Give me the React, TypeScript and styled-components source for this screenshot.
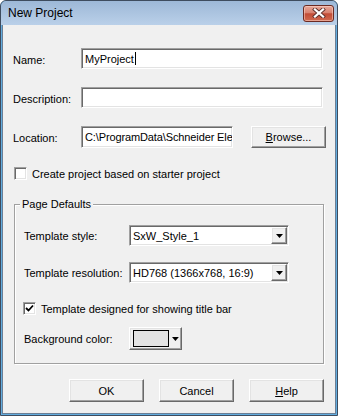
import React from "react";
import styled, { createGlobalStyle, css } from "styled-components";

const Global = createGlobalStyle`
  html, body { margin: 0; padding: 0; background: #fff; }
  body { font-family: "Liberation Sans", Arial, sans-serif; font-size: 11px; color: #000; }
  * { box-sizing: border-box; }
`;

const sunken = css`
  border: 1px solid;
  border-color: #a0a0a0 #ffffff #ffffff #a0a0a0;
  box-shadow: inset 1px 1px 0 #696969, inset -1px -1px 0 #e3e3e3;
`;

const raised = css`
  border: 1px solid;
  border-color: #ffffff #696969 #696969 #ffffff;
  box-shadow: inset -1px -1px 0 #a0a0a0, inset 1px 1px 0 #e3e3e3;
`;

const Window = styled.div`
  width: 338px;
  height: 416px;
  border: 1px solid #3e4c5e;
  border-radius: 6px 6px 0 0;
  background: #62ade0;
  display: flex;
  flex-direction: column;
  overflow: hidden;
`;

const TitleBar = styled.div`
  height: 24px;
  flex: none;
  display: flex;
  align-items: center;
  justify-content: space-between;
  padding: 0 3px 0 7px;
  background: linear-gradient(#9db8d7, #bad0e9);
  border-radius: 5px 5px 0 0;
`;

const Title = styled.span`
  font-family: "Liberation Sans", Arial, sans-serif;
  font-size: 12px;
  color: #000;
`;

const CloseButton = styled.div`
  width: 31px;
  height: 17px;
  border: 1px solid #6b2a22;
  border-radius: 3px;
  background: linear-gradient(#e8a899 0%, #d88270 45%, #c24c36 52%, #d06a50 100%);
  box-shadow: inset 0 0 0 1px rgba(255, 220, 210, 0.5);
  display: flex;
  align-items: center;
  justify-content: center;
`;

const Body = styled.div`
  flex: 1;
  margin: 0 1px 1px;
  background: #f0f0f0;
  border: 1px solid #6a7f96;
  border-top: none;
  padding: 0 10px;
  display: flex;
  flex-direction: column;
`;

const FieldRow = styled.div<{ $top: number; $labelWidth: number }>`
  display: grid;
  grid-template-columns: ${(p) => p.$labelWidth}px auto auto;
  justify-content: start;
  align-items: center;
  margin-top: ${(p) => p.$top}px;
`;

const Label = styled.label<{ $drop?: number }>`
  padding-top: ${(p) => p.$drop ?? 0}px;
  white-space: nowrap;
`;

const TextBox = styled.div<{ $width: number; $height?: number; $tight?: boolean }>`
  ${sunken};
  width: ${(p) => p.$width}px;
  height: ${(p) => p.$height ?? 21}px;
  background: #fff;
  padding: 0 ${(p) => (p.$tight ? 1 : 3)}px 0 3px;
  letter-spacing: ${(p) => (p.$tight ? "-0.12px" : "0")};
  display: flex;
  align-items: center;
  overflow: hidden;
  white-space: nowrap;
`;

const Caret = styled.span`
  display: inline-block;
  width: 1px;
  height: 13px;
  background: #000;
  margin-left: 1px;
`;

const Button = styled.div<{ $width: number; $height?: number; $gapLeft?: number }>`
  ${raised};
  width: ${(p) => p.$width}px;
  height: ${(p) => p.$height ?? 23}px;
  margin-left: ${(p) => p.$gapLeft ?? 0}px;
  background: #f0f0f0;
  display: flex;
  align-items: center;
  justify-content: center;
  white-space: nowrap;
`;

const Mnemonic = styled.span`
  text-decoration: underline;
`;

const CheckRow = styled.div<{ $top: number; $left: number }>`
  display: flex;
  align-items: center;
  gap: 5px;
  margin-top: ${(p) => p.$top}px;
  margin-left: ${(p) => p.$left}px;
`;

const CheckBox = styled.div`
  ${sunken};
  width: 13px;
  height: 13px;
  background: #fff;
  display: flex;
  align-items: center;
  justify-content: center;
`;

const Group = styled.fieldset`
  margin: 17px 0 0 1px;
  width: 310px;
  min-width: 0;
  padding: 14px 0 13px 9px;
  border: 1px solid #a0a0a0;
  box-shadow: 1px 1px 0 #fff, inset 1px 1px 0 #fff;
`;

const Legend = styled.legend`
  padding: 0 2px;
  margin-left: -4px;
  line-height: 14px;
  background: #f0f0f0;
`;

const Combo = styled.div`
  ${sunken};
  width: 160px;
  height: 21px;
  background: #fff;
  display: flex;
  align-items: center;
  justify-content: space-between;
  padding: 1px 1px 1px 3px;
  white-space: nowrap;
`;

const ComboArrow = styled.div`
  ${raised};
  width: 16px;
  height: 17px;
  background: #f0f0f0;
  display: flex;
  align-items: center;
  justify-content: center;
`;

const ColorButton = styled.div`
  ${raised};
  width: 53px;
  height: 23px;
  background: #f0f0f0;
  display: flex;
  align-items: center;
  gap: 3px;
  padding: 2px 2px 2px 3px;
`;

const Swatch = styled.div<{ $color: string }>`
  width: 37px;
  height: 17px;
  border: 1px solid #000;
  background: ${(p) => p.$color};
`;

const ButtonBar = styled.div`
  display: flex;
  justify-content: flex-end;
  gap: 15px;
  margin: 15px 1px 0 0;
`;

const DownTriangle = ({ w = 7, h = 4 }: { w?: number; h?: number }) => (
  <svg width={w} height={h} viewBox={`0 0 ${w} ${h}`}>
    <polygon points={`0,0 ${w},0 ${w / 2},${h}`} fill="#000" />
  </svg>
);

const CheckMark = () => (
  <svg width="9" height="9" viewBox="0 0 9 9">
    <path d="M1 4 L3.5 6.5 L8 1.5" stroke="#000" strokeWidth="1.8" fill="none" />
  </svg>
);

const CloseGlyph = () => (
  <svg width="14" height="10" viewBox="0 0 14 10">
    <path d="M3 1.5 L11 8.5 M11 1.5 L3 8.5" stroke="#5b2f2a" strokeWidth="4" strokeLinecap="square" />
    <path d="M3 1.5 L11 8.5 M11 1.5 L3 8.5" stroke="#fff" strokeWidth="2.3" strokeLinecap="square" />
  </svg>
);

export default function App() {
  return (
    <>
      <Global />
      <Window>
        <TitleBar>
          <Title>New Project</Title>
          <CloseButton>
            <CloseGlyph />
          </CloseButton>
        </TitleBar>
        <Body>
          <FieldRow $top={23} $labelWidth={68}>
            <Label $drop={3}>Name:</Label>
            <TextBox $width={242}>
              MyProject
              <Caret />
            </TextBox>
          </FieldRow>
          <FieldRow $top={18} $labelWidth={68}>
            <Label $drop={3}>Description:</Label>
            <TextBox $width={242} />
          </FieldRow>
          <FieldRow $top={18} $labelWidth={68}>
            <Label $drop={2}>Location:</Label>
            <TextBox $width={152} $height={22} $tight>
              C:\ProgramData\Schneider Ele
            </TextBox>
            <Button $width={75} $height={22} $gapLeft={18}>
              <span>
                <Mnemonic>B</Mnemonic>rowse...
              </span>
            </Button>
          </FieldRow>
          <CheckRow $top={19} $left={1}>
            <CheckBox />
            <span>Create project based on starter project</span>
          </CheckRow>
          <Group>
            <Legend>Page Defaults</Legend>
            <FieldRow $top={0} $labelWidth={105}>
              <Label>Template style:</Label>
              <Combo>
                <span>SxW_Style_1</span>
                <ComboArrow>
                  <DownTriangle />
                </ComboArrow>
              </Combo>
            </FieldRow>
            <FieldRow $top={16} $labelWidth={105}>
              <Label>Template resolution:</Label>
              <Combo>
                <span>HD768 (1366x768, 16:9)</span>
                <ComboArrow>
                  <DownTriangle />
                </ComboArrow>
              </Combo>
            </FieldRow>
            <CheckRow $top={19} $left={-1}>
              <CheckBox>
                <CheckMark />
              </CheckBox>
              <span>Template designed for showing title bar</span>
            </CheckRow>
            <FieldRow $top={12} $labelWidth={105}>
              <Label>Background color:</Label>
              <ColorButton>
                <Swatch $color="#e3e3e3" />
                <DownTriangle w={7} h={4} />
              </ColorButton>
            </FieldRow>
          </Group>
          <ButtonBar>
            <Button $width={75}>OK</Button>
            <Button $width={75}>Cancel</Button>
            <Button $width={75}>
              <span>
                <Mnemonic>H</Mnemonic>elp
              </span>
            </Button>
          </ButtonBar>
        </Body>
      </Window>
    </>
  );
}
